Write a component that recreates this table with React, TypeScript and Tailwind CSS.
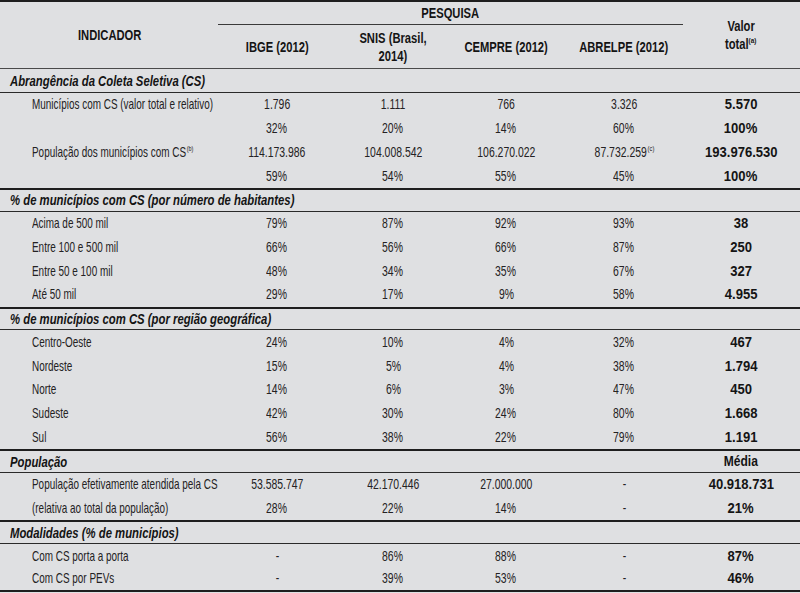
import React from 'react';

type Row = [string, string, string, string, string, string];

interface Section {
  title: string;
  extra?: string;
  rows: Row[];
}

const sections: Section[] = [
  {
    title: 'Abrangência da Coleta Seletiva (CS)',
    rows: [
      ['Municípios com CS (valor total e relativo)', '1.796', '1.111', '766', '3.326', '5.570'],
      ['', '32%', '20%', '14%', '60%', '100%'],
      ['População dos municípios com CS^(b)', '114.173.986', '104.008.542', '106.270.022', '87.732.259^(c)', '193.976.530'],
      ['', '59%', '54%', '55%', '45%', '100%'],
    ],
  },
  {
    title: '% de municípios com CS (por número de habitantes)',
    rows: [
      ['Acima de 500 mil', '79%', '87%', '92%', '93%', '38'],
      ['Entre 100 e 500 mil', '66%', '56%', '66%', '87%', '250'],
      ['Entre 50 e 100 mil', '48%', '34%', '35%', '67%', '327'],
      ['Até 50 mil', '29%', '17%', '9%', '58%', '4.955'],
    ],
  },
  {
    title: '% de municípios com CS (por região geográfica)',
    rows: [
      ['Centro-Oeste', '24%', '10%', '4%', '32%', '467'],
      ['Nordeste', '15%', '5%', '4%', '38%', '1.794'],
      ['Norte', '14%', '6%', '3%', '47%', '450'],
      ['Sudeste', '42%', '30%', '24%', '80%', '1.668'],
      ['Sul', '56%', '38%', '22%', '79%', '1.191'],
    ],
  },
  {
    title: 'População',
    extra: 'Média',
    rows: [
      ['População efetivamente atendida pela CS', '53.585.747', '42.170.446', '27.000.000', '-', '40.918.731'],
      ['(relativa ao total da população)', '28%', '22%', '14%', '-', '21%'],
    ],
  },
  {
    title: 'Modalidades (% de municípios)',
    rows: [
      ['Com CS porta a porta', '-', '86%', '88%', '-', '87%'],
      ['Com CS por PEVs', '-', '39%', '53%', '-', '46%'],
    ],
  },
];

// 218 | 118 | 114 | 112 | 124 | 110  (column centres 277 / 393 / 506 / 624 / 741)
const cols = 'grid grid-cols-[218px_118px_114px_112px_124px_110px]';

// the print uses a condensed face; squeeze Liberation Sans to match
const descCls = 'inline-block whitespace-nowrap origin-left scale-x-[0.685]';
const numCls = 'inline-block whitespace-nowrap scale-x-[0.72]';
const totalCls = 'inline-block whitespace-nowrap scale-x-[0.9] font-bold text-[14.5px] text-[#141414]';
const headCls = 'inline-block whitespace-nowrap scale-x-[0.8]';
const titleCls = 'inline-block whitespace-nowrap origin-left scale-x-[0.755] font-bold italic text-[15px] text-[#141414]';

function WithSup({ text }: { text: string }) {
  const m = text.match(/^(.*)\^\((.)\)$/);
  if (!m) return <>{text}</>;
  return (
    <>
      {m[1]}
      <sup className="text-[8px] top-[-0.7em] ml-[1px]">({m[2]})</sup>
    </>
  );
}

function DataRow({ row, last }: { row: Row; last: boolean }) {
  return (
    <div className={`${cols} h-[23.75px] items-center ${last ? 'border-b-2 border-[#1e1e1e]' : ''}`}>
      <div className="pl-[32px]">
        <span className={descCls}>
          <WithSup text={row[0]} />
        </span>
      </div>
      {row.slice(1).map((v, i) => (
        <div key={i} className="flex justify-center">
          <span className={i === 4 ? totalCls : numCls}>
            <WithSup text={v} />
          </span>
        </div>
      ))}
    </div>
  );
}

export default function App() {
  return (
    <div
      className="w-[800px] h-[593px] bg-[#dfe0e2] text-[#242223] text-[14.5px] leading-none overflow-hidden"
      style={{ fontFamily: '"Liberation Sans", Arial, sans-serif' }}
    >
      {/* header */}
      <div className="border-t-2 border-[#1e1e1e] border-b border-b-[#4a4a4a] h-[69px] grid grid-cols-[218px_118px_114px_112px_124px_110px] grid-rows-[23px_1fr] font-bold text-[14px] text-[#141414]">
        <div className="row-span-2 flex items-center justify-center pb-[1px] pl-[2px]">
          <span className={headCls}>INDICADOR</span>
        </div>
        <div className="col-span-4 flex items-center justify-center border-b border-[#3a3a3a] mr-[3px]">
          <span className={headCls}>PESQUISA</span>
        </div>
        <div className="row-span-2 flex flex-col items-center justify-center leading-[18px]">
          <span className={headCls}>Valor</span>
          <span className={headCls}>
            total<sup className="text-[8px] top-[-0.7em]">(a)</sup>
          </span>
        </div>
        <div className="flex items-center justify-center pt-[1px]">
          <span className={headCls}>IBGE (2012)</span>
        </div>
        <div className="flex flex-col items-center justify-center leading-[18px] pt-[1px]">
          <span className={headCls}>SNIS (Brasil,</span>
          <span className={headCls}>2014)</span>
        </div>
        <div className="flex items-center justify-center pt-[1px]">
          <span className={headCls}>CEMPRE (2012)</span>
        </div>
        <div className="flex items-center justify-center pt-[1px]">
          <span className={headCls}>ABRELPE (2012)</span>
        </div>
      </div>

      {sections.map((s, si) => (
        <div key={si}>
          <div
            className={`${cols} h-[23.75px] items-center border-b border-[#2a2a2a] ${
              si > 0 ? 'border-t-2 border-t-[#1e1e1e]' : ''
            }`}
          >
            <div className="col-span-5 pl-[10px]">
              <span className={titleCls}>{s.title}</span>
            </div>
            <div className="flex justify-center font-bold text-[14px] text-[#141414]">
              {s.extra && <span className="inline-block whitespace-nowrap scale-x-[0.86]">{s.extra}</span>}
            </div>
          </div>
          {s.rows.map((r, ri) => (
            <DataRow key={ri} row={r} last={si === sections.length - 1 && ri === s.rows.length - 1} />
          ))}
        </div>
      ))}
    </div>
  );
}
